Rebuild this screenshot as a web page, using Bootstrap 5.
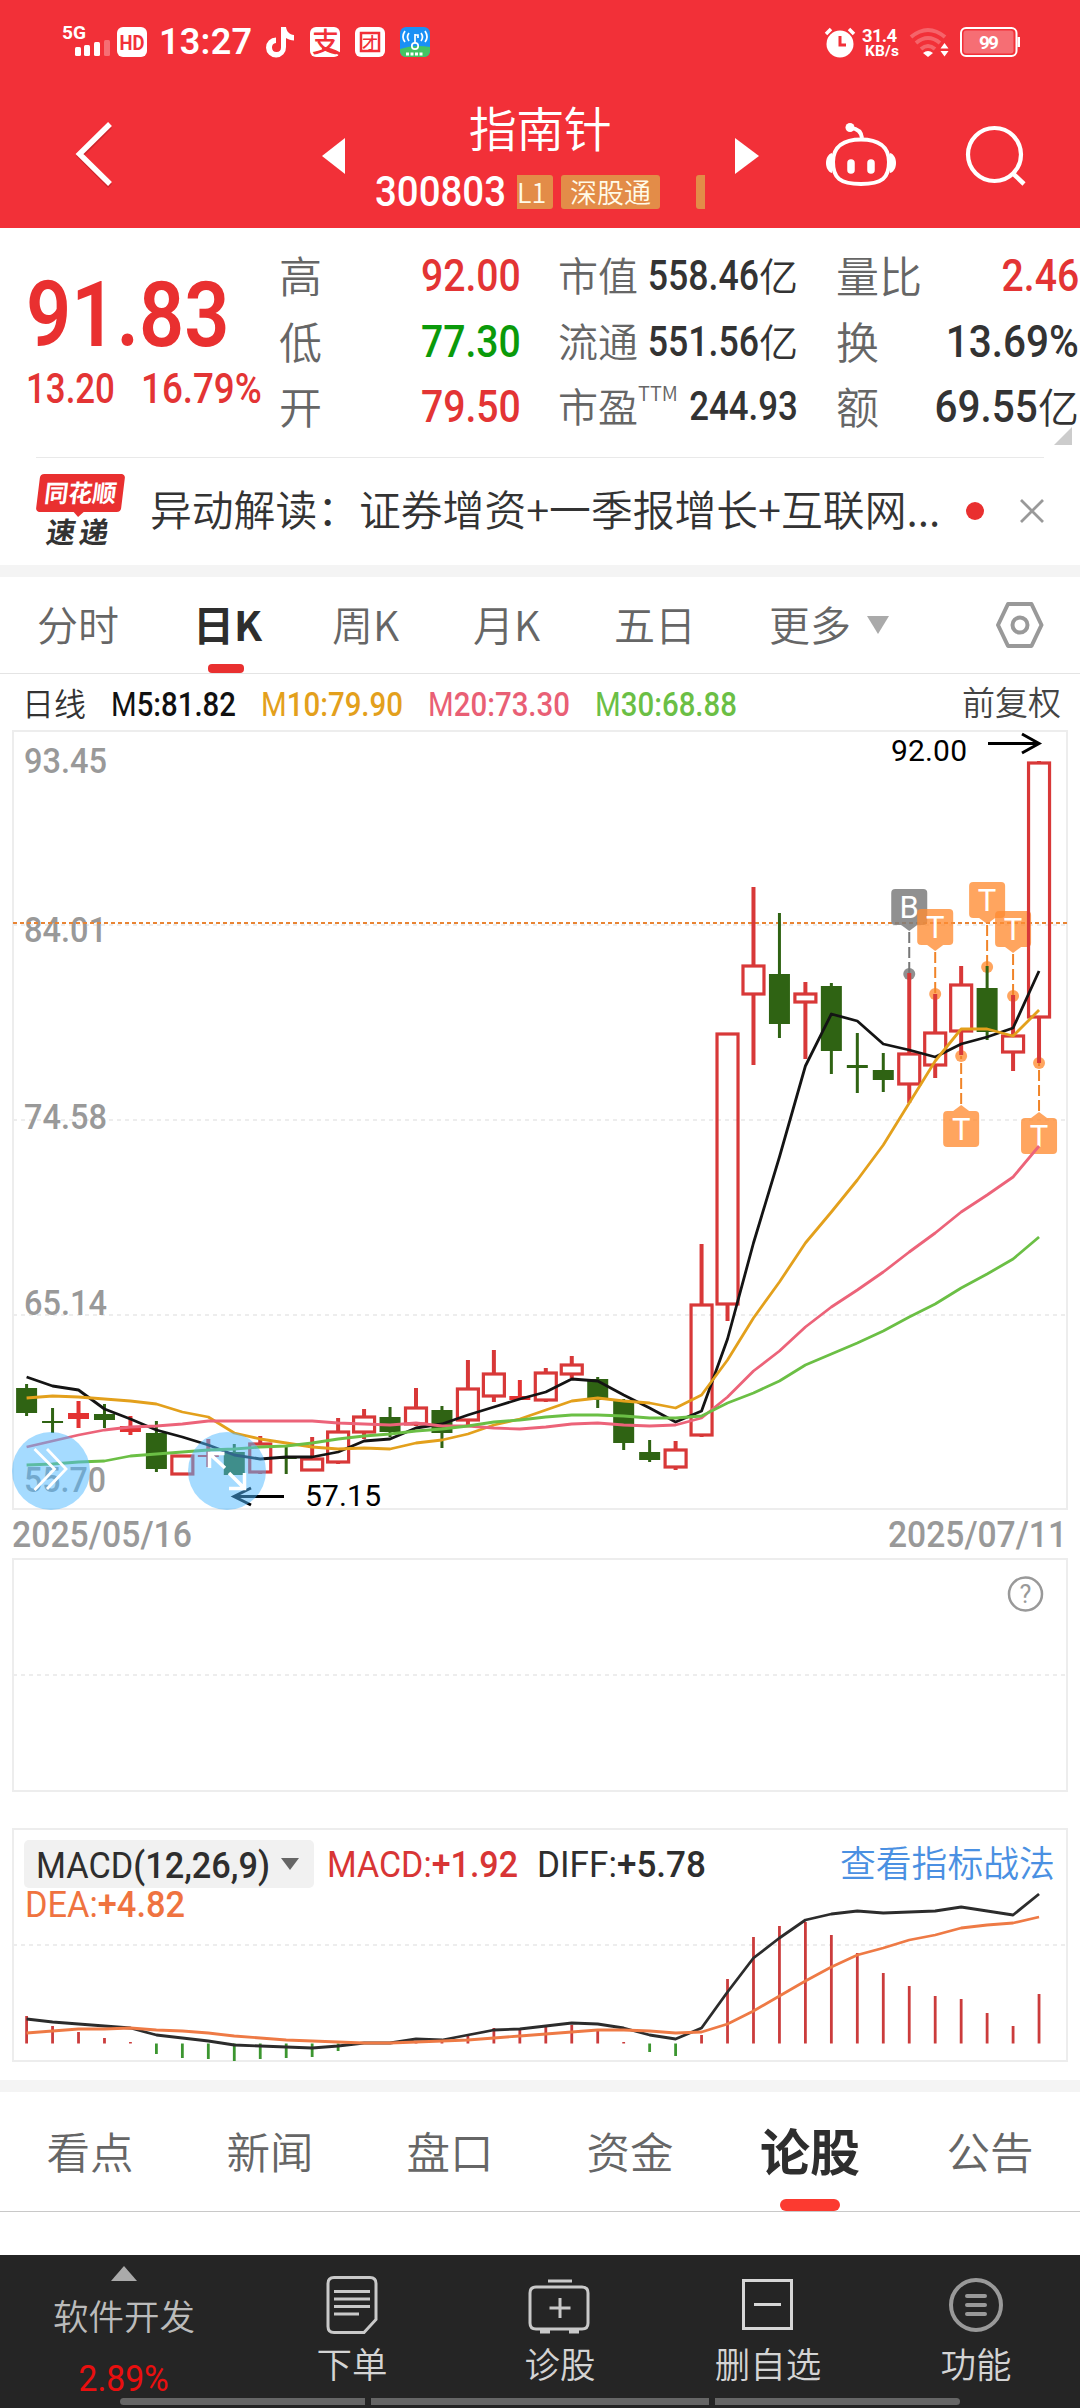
<!DOCTYPE html>
<html lang="zh-CN">
<head>
<meta charset="utf-8">
<meta name="viewport" content="width=device-width, initial-scale=1">
<title>指南针 300803</title>
<link href="https://cdn.jsdelivr.net/npm/bootstrap@5.3.0/dist/css/bootstrap.min.css" rel="stylesheet">
<style>
body{width:1080px;height:2408px;overflow:hidden;background:#fff;color:#333;font-family:Roboto,"Noto Sans CJK SC",sans-serif;line-height:1;}
svg{display:block;flex:none}
.cjk{font-family:"Noto Sans CJK SC",sans-serif;font-weight:350}
.num{display:inline-block;transform:scaleX(.87);transform-origin:right center;font-weight:500;white-space:nowrap}
.num-l{transform-origin:left center}
.up{color:#e33434}.down{color:#0a9a0a}
.top-red{height:228px;background:#f23038;color:#fff}
.status-row{height:84px}
.title-row{height:144px}
.title-mid{width:330px;height:144px;padding-top:14px}
.stock-name{font-size:48px;line-height:56px;letter-spacing:-.5px}
.code-row{margin-top:19px}
.stock-code{font-size:42px;line-height:38px;width:130px;margin-right:12px}
.stock-code .num{transform:scaleX(.915)}
.tagbox{background:#e38c48;height:34px;border-radius:3px;font-size:27px;line-height:33px;color:#fffbe8;white-space:nowrap}
.tag-a{width:36px;border-radius:0 3px 3px 0}.tag-b{width:99px}.tag-c{width:9px;margin-left:36px;border-radius:3px 0 0 3px}
.quote{height:229px;padding-top:15px;position:relative}
.price-col{width:279px;padding-left:26px;padding-top:34px}
.price{font-size:91px;line-height:76px;color:#e93030;font-weight:600;transform:scaleX(.87)}
.chg{font-size:42px;line-height:60px;margin-top:6px}
.chg .num{transform:scaleX(.83)}
.chg .num+.num{transform:scaleX(.875)}
.chg span:first-child{width:116px}
.q-row{height:65.5px;line-height:65px;font-size:45px;white-space:nowrap}
.q-row .cjk{color:#666;font-size:43px;position:relative;top:-1px}
.q-row .yi{font-size:41px;color:#333}
.q-mid .q-row{font-size:42px}.q-mid .q-row .cjk{font-size:40px}
.q-mid .q-row .num{margin-left:-24px;transform:scaleX(.85)}
.q-mid .q-row .yi{font-size:39px}
.q-mid .q-row .ttm{font-size:20px;top:-14px}
.q-mid .q-row .nm-s{font-size:41px}
.q-a{width:242px}.q-mid{width:240px;margin-left:37px}.q-b{width:243px;margin-left:38px}
.q-b .wide-num{transform:scaleX(.9)}
.fold{position:absolute;right:8px;top:199px}
.news{height:108px;margin:0 36px;border-top:1px solid #e9e9e9}
.news-text{font-size:41.8px;width:790px;margin-left:26px;white-space:nowrap;color:#333;padding-bottom:5px}
.brand{width:88px;height:76px}
.brand-a{width:85px;height:38px;background:#e93030;border-radius:4px;transform:skewX(-7deg);color:#fff;font-size:24px;font-weight:900;line-height:36px;text-align:center;margin-left:2px;position:relative}
.brand-a:after{content:"";position:absolute;left:37px;top:37px;border:6px solid transparent;border-top-color:#e93030}
.brand-b{font-size:29px;font-weight:900;transform:skewX(-9deg);line-height:36px;margin-left:11px;letter-spacing:4px;white-space:nowrap}
.band{height:12px;background:#f4f4f4}
.ktabs{height:97px;border-bottom:1px solid #e4e4e4;font-size:41px;color:#666;padding-left:37px}
.ktabs .kt{line-height:93px;height:96px;position:relative;white-space:nowrap}
.ktabs .on{color:#2e2e2e;font-weight:700;text-indent:-4px}
.ktabs .on:after{content:"";position:absolute;left:11px;bottom:0;width:36px;height:9px;border-radius:4px;background:#e93030}
.ktabs .kt:nth-child(1){width:160px}.ktabs .kt:nth-child(2){width:135px}.ktabs .kt:nth-child(3){width:141px}.ktabs .kt:nth-child(4){width:141px}.ktabs .kt:nth-child(5){width:155px}.ktabs .kt:nth-child(6){width:98px}
.panels text{font-family:Roboto,"Noto Sans CJK SC",sans-serif}
.panels .lbl{fill:#999;font-weight:500}
.itabs{height:120px;border-bottom:1px solid #c8c8c8;font-size:43.5px;color:#666}
.itabs .it{width:180px;height:119px;line-height:117px;text-align:center;position:relative}
.itabs .on{font-size:50px;line-height:115px;color:#2e2e2e;font-weight:600}
.itabs .on:after{content:"";position:absolute;left:60px;bottom:0;width:60px;height:12px;border-radius:6px;background:#fc3a30}
.dock{height:153px;background:#252525;color:#d4d4d4;font-size:35.5px;margin-top:43px;position:relative}
.dock .dk{width:208px}
.dock .dk:first-child{width:248px;color:#bbb}
.dock .rate{font-family:Roboto,sans-serif;font-size:37px;font-weight:400;color:#e90f0f;transform:scaleX(.91);margin-top:27px}
.homebar{position:absolute;left:120px;top:143px;gap:6px}
.homebar i{height:7px;background:#666}
</style>
</head>
<body class="d-flex flex-column">
<header class="top-red">
  <div class="status-row">
  <svg width="1080" height="84" viewBox="0 0 1080 84" fill="#fff" font-family="Roboto" font-weight="700">
    <text x="62" y="39" font-size="19" textLength="24" lengthAdjust="spacingAndGlyphs">5G</text>
    <rect x="75" y="47" width="6" height="9" rx="1.5"/><rect x="84" y="45" width="6" height="11" rx="1.5"/><rect x="94" y="42" width="6" height="14" rx="1.5"/><rect x="104" y="40" width="6" height="16" rx="1.5" opacity=".3"/>
    <rect x="117" y="27" width="30" height="30" rx="6"/>
    <text x="119.500" y="49.500" font-size="20" fill="#f23038" textLength="25" lengthAdjust="spacingAndGlyphs">HD</text>
    <text x="159" y="53.500" font-size="36" font-weight="600" textLength="93">13:27</text>
    <path d="M281 27h5c.5 4.500 3.500 7.500 8 8v5.500c-3 0-5.500-1-8-2.500v9a10 10 0 1 1-10-9.500v5.500a4.500 4.500 0 1 0 5 4.500z"/>
    <rect x="310" y="27" width="30" height="30" rx="6"/>
    <text x="312" y="52" font-size="27" fill="#f23038" font-family="Noto Sans CJK SC" font-weight="500">支</text>
    <path d="M322 48q9 1 18 6" fill="none" stroke="#f23038" stroke-width="3"/>
    <rect x="355" y="27" width="30" height="30" rx="6"/>
    <path d="M361 33h18v18h-18z" fill="none" stroke="#f23038" stroke-width="2.500"/>
    <text x="362" y="49" font-size="16" fill="#f23038" font-family="Noto Sans CJK SC" font-weight="500">才</text>
    <rect x="400" y="27" width="30" height="30" rx="6" fill="#1a90f5"/>
    <path d="M400 49q14-5 30-2v4a6 6 0 0 1-6 6h-18a6 6 0 0 1-6-6z" fill="#43c463"/>
    <g fill="none" stroke="#fff" stroke-width="1.700"><circle cx="415" cy="46" r="3.200"/><path d="M415 43v-9m0 1h3v3M409 33q-3 4 0 8M405 31q-4 6 0 11M421 33q3 4 0 8M425 31q4 6 0 11"/></g>
    <path d="M406 54h18" stroke="#fff" stroke-width="3" stroke-dasharray="3 1.500"/>
    <circle cx="840" cy="44" r="13.500"/><path d="M826 34l5-5M849 29l5 5" stroke="#fff" stroke-width="3.500"/><path d="M840 36v9h6" fill="none" stroke="#f23038" stroke-width="3"/>
    <text x="862" y="41.500" font-size="18.500" textLength="35">31.4</text><text x="865" y="56" font-size="15.500" textLength="34">KB/s</text>
    <g fill="none" stroke="#fff" stroke-width="4" opacity=".25"><path d="M911 37q17-14 34 0M916 43q12-10 24 0M921 49q7-6 14 0"/></g><path d="M923 53q5-4 10 0l-5 4z"/>
    <path d="M940.500 48.500l4-5.500 4 5.500zM940.500 51l4 5.500 4-5.500z"/>
    <rect x="961" y="28" width="55.500" height="28" rx="5" fill="none" stroke="#fff" stroke-width="2"/><rect x="963.500" y="30.500" width="50" height="23" rx="3" opacity=".3"/><path d="M1017.500 37h2.500v10h-2.500z"/>
    <text x="979" y="49" font-size="19" textLength="20">99</text>
  </svg>
  </div>
  <div class="title-row d-flex">
    <svg width="375" height="144" viewBox="0 84 375 144"><path d="M110 124L80 154l30 30" fill="none" stroke="#8c1018" stroke-opacity=".35" stroke-width="5.500" transform="translate(0 2)"/><path d="M110 124L79.500 154l30.500 30" fill="none" stroke="#fff" stroke-width="5.500"/><path d="M322 156l23-18v36z" fill="#fff"/></svg>
    <div class="title-mid">
      <div class="stock-name text-center cjk">指南针</div>
      <div class="code-row d-flex align-items-center">
        <div class="stock-code"><span class="num num-l">300803</span></div>
        <div class="tagbox tag-a cjk">L1</div>
        <div class="tagbox tag-b cjk text-center ms-2">深股通</div>
        <div class="tagbox tag-c"></div>
      </div>
    </div>
    <svg width="375" height="144" viewBox="705 84 375 144" fill="none" stroke="#fff"><path d="M735 138l24 18-24 18z" fill="#fff" stroke="none"/>
      <path d="M861 139.500c17 0 28 7 28 22.500 0 16-7 22-28 22s-28-6-28-22c0-15.500 11-22.500 28-22.500z" stroke-width="4"/>
      <path d="M862 138q-1-9-11-10" stroke-width="4"/><circle cx="850" cy="127.500" r="4.500" fill="#fff" stroke="none"/>
      <path d="M832 153c-8 2-8 18 0 20zM890 153c8 2 8 18 0 20z" fill="#fff" stroke="none"/>
      <path d="M851 163v7M871 163v7" stroke-width="7.500" stroke-linecap="round"/>
      <circle cx="994.500" cy="154.500" r="26.500" stroke-width="4.200"/><path d="M1012.500 173l11.500 11" stroke-width="4.500"/></svg>
  </div>
</header>

<section class="quote d-flex">
  <div class="price-col">
    <div class="price num num-l">91.83</div>
    <div class="chg up d-flex"><span class="num num-l">13.20</span><span class="num num-l">16.79%</span></div>
  </div>
  <div class="q-a">
    <div class="q-row d-flex justify-content-between"><span class="cjk">高</span><span class="num up">92.00</span></div>
    <div class="q-row d-flex justify-content-between"><span class="cjk">低</span><span class="num down">77.30</span></div>
    <div class="q-row d-flex justify-content-between"><span class="cjk">开</span><span class="num up">79.50</span></div>
  </div>
  <div class="q-mid">
    <div class="q-row d-flex"><span class="cjk me-auto">市值</span><span class="num">558.46</span><span class="cjk yi">亿</span></div>
    <div class="q-row d-flex"><span class="cjk me-auto">流通</span><span class="num">551.56</span><span class="cjk yi">亿</span></div>
    <div class="q-row d-flex"><span class="cjk">市盈</span><span class="cjk ttm me-auto">TTM</span><span class="num nm-s">244.93</span></div>
  </div>
  <div class="q-b">
    <div class="q-row d-flex justify-content-between"><span class="cjk">量比</span><span class="num up">2.46</span></div>
    <div class="q-row d-flex justify-content-between"><span class="cjk">换</span><span class="num wide-num">13.69%</span></div>
    <div class="q-row d-flex"><span class="cjk me-auto">额</span><span class="num wide-num">69.55</span><span class="cjk yi">亿</span></div>
  </div>
  <svg class="fold" width="18" height="18"><path d="M18 0v18H0z" fill="#ccc"/></svg>
</section>

<section class="news d-flex align-items-center">
  <div class="brand"><div class="brand-a cjk fw-bolder">同花顺</div><div class="brand-b cjk fw-bolder">速递</div></div>
  <div class="news-text cjk">异动解读：证券增资+一季报增长+互联网...</div>
  <svg class="ms-auto" width="80" height="30" viewBox="964 497 80 30"><circle cx="975" cy="511" r="9" fill="#e93030"/><path d="M1021 500l22 22m0-22l-22 22" stroke="#999" stroke-width="2.800"/></svg>
</section>
<div class="band"></div>

<nav class="ktabs d-flex cjk">
  <div class="kt">分时</div><div class="kt on">日K</div><div class="kt">周K</div><div class="kt">月K</div><div class="kt">五日</div><div class="kt">更多</div>
  <svg width="190" height="96" viewBox="867 577 190 96"><path d="M867 616h22l-11 18z" fill="#aaa"/><g fill="none" stroke="#999" stroke-width="4"><path d="M1008 604h23.500l10 21-10 21H1008l-10-21z" stroke-linejoin="round"/><circle cx="1020" cy="625" r="7.500"/></g></svg>
</nav>

<main class="panels">
<svg id="chart" width="1080" height="1406" viewBox="0 674 1080 1406">
  <g font-size="34" font-weight="500">
    <text x="22" y="716" font-size="32" font-weight="350" fill="#333" class="cjk">日线</text>
    <text x="111" y="716" fill="#111" textLength="125" lengthAdjust="spacingAndGlyphs"><tspan font-weight="400">M</tspan>5:81.82</text>
    <text x="261" y="716" fill="#e3a01c" textLength="142" lengthAdjust="spacingAndGlyphs"><tspan font-weight="400">M</tspan>10:79.90</text>
    <text x="428" y="716" fill="#e95f75" textLength="142" lengthAdjust="spacingAndGlyphs"><tspan font-weight="400">M</tspan>20:73.30</text>
    <text x="595" y="716" fill="#6bbf45" textLength="142" lengthAdjust="spacingAndGlyphs"><tspan font-weight="400">M</tspan>30:68.88</text>
    <text x="962" y="715" font-size="33" font-weight="350" fill="#444" class="cjk">前复权</text>
  </g>
  <g fill="none" stroke="#ededed" stroke-width="2">
    <path d="M13 731H1067V1509H13zM13 1559H1067V1791H13zM13 1829H1067V2061H13z"/>
    <path d="M13 925H1067M13 1120H1067M13 1315H1067M13 1675H1067M13 1945H1067" stroke-dasharray="4 4"/>
  </g>
  <g class="lbl" font-size="35">
    <text x="24" y="773" textLength="83" lengthAdjust="spacingAndGlyphs">93.45</text>
    <text x="24" y="942" textLength="83" lengthAdjust="spacingAndGlyphs">84.01</text>
    <text x="24" y="1129" textLength="83" lengthAdjust="spacingAndGlyphs">74.58</text>
    <text x="24" y="1315" textLength="83" lengthAdjust="spacingAndGlyphs">65.14</text>
    <text x="24" y="1492" textLength="82" lengthAdjust="spacingAndGlyphs">55.70</text>
    <text x="12" y="1547" font-size="36.500" textLength="180" lengthAdjust="spacingAndGlyphs">2025/05/16</text>
    <text x="888" y="1547" font-size="36.500" textLength="179" lengthAdjust="spacingAndGlyphs">2025/07/11</text>
  </g>
  <path d="M13 923H1067" stroke="#e98433" stroke-width="2" stroke-dasharray="4 3"/>
  <g id="marks"></g>
  <g id="candles"></g>
  <g id="lines" fill="none" stroke-width="2.800" stroke-linejoin="round"></g>
  <g font-size="30" fill="#000"><text x="891" y="761" textLength="76">92.00</text><text x="305" y="1506" textLength="76">57.15</text></g>
  <g fill="none" stroke="#000" stroke-width="3"><path d="M988 743.500h50M1022 734l17 9.500-17 9.500M284 1496.500h-50M251 1488l-17 8.500 17 8.500"/></g>
  <g fill="#4eb8ff" fill-opacity=".51"><circle cx="51" cy="1471" r="39"/><circle cx="227" cy="1471" r="39"/></g>
  <g fill="none" stroke="#fff" stroke-width="2.800"><path d="M34.500 1449l20 20-20 21M47 1449l19 20-19 20"/><path d="M209.500 1468v-14.500h15M211 1455l14 13M229 1473l15 15M244.500 1473v15.500h-15.500" stroke-width="3.500"/></g>
  <circle cx="1025.500" cy="1594" r="16.500" fill="none" stroke="#999" stroke-width="2.500"/><text x="1025.500" y="1603" font-size="25" fill="#999" text-anchor="middle">?</text>
  <rect x="24" y="1840" width="290" height="48" rx="5" fill="#f1f1f1"/><path d="M281 1858h18l-9 12z" fill="#666"/>
  <g font-size="37" font-weight="500">
    <text x="36" y="1878" fill="#2e2e2e" textLength="234" lengthAdjust="spacingAndGlyphs"><tspan font-weight="400">MACD</tspan>(12,26,9)</text>
    <text x="327" y="1877" fill="#d83535" textLength="191" lengthAdjust="spacingAndGlyphs"><tspan font-weight="400">MACD:</tspan>+1.92</text>
    <text x="537" y="1877" fill="#2e2e2e" textLength="169" lengthAdjust="spacingAndGlyphs"><tspan font-weight="400">DIFF:</tspan>+5.78</text>
    <text x="25" y="1917" fill="#ef7340" textLength="160" lengthAdjust="spacingAndGlyphs"><tspan font-weight="400">DEA:</tspan>+4.82</text>
    <text x="840" y="1877" fill="#4a90e2" font-size="35.800" font-weight="350" class="cjk">查看指标战法</text>
  </g>
  <g id="macd"></g>
</svg>
</main>
<div class="band"></div>

<nav class="itabs d-flex cjk">
  <div class="it">看点</div><div class="it">新闻</div><div class="it">盘口</div><div class="it">资金</div><div class="it on">论股</div><div class="it">公告</div>
</nav>

<footer class="dock d-flex cjk">
  <div class="dk d-flex flex-column align-items-center"><svg class="mt-2" width="26" height="18" viewBox="0 -3 26 18"><path d="M13 0l13 15H0z" fill="#aaa"/></svg><div class="pt-3">软件开发</div><div class="rate">2.89%</div></div>
  <div class="dk d-flex flex-column align-items-center"><svg width="60" height="90" viewBox="322 2255 60 90" fill="none" stroke="#c9c9c9" stroke-width="3"><path d="M334 2277.500h36q6 0 6 6v36l-12 13h-30q-6 0-6-6v-43q0-6 6-6z"/><path d="M334 2291.500h36M334 2299h36M334 2306.500h36M334 2314h25"/></svg><div>下单</div></div>
  <div class="dk d-flex flex-column align-items-center"><svg width="70" height="90" viewBox="525 2255 70 90" fill="none" stroke="#c9c9c9" stroke-width="3"><path d="M548 2281h24M536 2287h46q6 0 6 6v30q0 6-6 6h-46q-6 0-6-6v-30q0-6 6-6zM560 2298v20M549.500 2308h21"/><path d="M540 2331.500h10M569 2331.500h10" stroke-width="4"/></svg><div>诊股</div></div>
  <div class="dk d-flex flex-column align-items-center"><svg width="60" height="90" viewBox="738 2255 60 90" fill="none" stroke="#d6d6d6" stroke-width="3"><path d="M743.500 2280.500h48v48h-48zM754 2304.500h27"/></svg><div>删自选</div></div>
  <div class="dk d-flex flex-column align-items-center"><svg width="60" height="90" viewBox="946 2255 60 90" fill="none" stroke="#999" stroke-width="4"><circle cx="976" cy="2305" r="25"/><path d="M967 2296h18M967 2305h18M967 2314h18" stroke-linecap="round"/></svg><div>功能</div></div>
  <div class="homebar d-flex"><i class="rounded-start" style="width:245px"></i><i style="width:338px"></i><i class="rounded-end" style="width:245px"></i></div>
</footer>

<script src="https://cdn.jsdelivr.net/npm/bootstrap@5.3.0/dist/js/bootstrap.bundle.min.js"></script>
<script>
const X = i => 26.6 + i * 25.96;
// kind (r = hollow rise, f = flat rise, g = fall), wick top, body top, body bottom, wick bottom
const K = [['g',1384,1388,1413,1416],['g',1408,1421,1423,1433],['f',1401,1413,1419,1428],['g',1404,1414,1420,1428],['f',1416,1426,1432,1435],['g',1421,1433,1469,1472],['r',1456,1456,1474,1475],['f',1439,1455,1457,1467],['g',1444,1452,1475,1475],['r',1436,1444,1472,1474],['g',1447,1457,1459,1474],['r',1437,1459,1470,1470],['r',1418,1432,1462,1464],['r',1409,1417,1432,1439],['g',1407,1417,1432,1437],['r',1388,1408,1424,1426],['g',1406,1410,1433,1448],['r',1360,1389,1420,1427],['r',1350,1374,1396,1402],['f',1380,1396,1400,1400],['r',1368,1373,1400,1402],['r',1356,1365,1374,1378],['g',1377,1379,1400,1408],['g',1399,1400,1443,1450],['g',1440,1452,1460,1462],['r',1441,1450,1467,1470],['r',1244,1305,1435,1437],['r',1034,1034,1304,1321],['r',887,966,994,1065],['g',913,974,1024,1038],['r',982,994,1002,1059],['g',983,986,1051,1074],['g',1033,1065,1068,1093],['g',1053,1070,1080,1092],['r',973,1054,1084,1103],['r',994,1033,1065,1078],['r',966,985,1031,1055],['g',966,988,1032,1040],['r',995,1036,1052,1071],['r',761,763,1017,1063]];
candles.innerHTML = K.map(([k,a,b,c,d],i) => {
  const x = X(i), col = {g:'#2f6313', r:'#d83838', f:'#e33232'}[k];
  const wick = `<path d="M${x} ${a}V${b}M${x} ${c}V${d}" stroke="${col}" stroke-width="${k=='g'?3:4}"/>`;
  return wick + (k == 'r'
    ? `<rect x="${x-10.5}" y="${b}" width="21" height="${c-b}" fill="none" stroke="${col}" stroke-width="3.2"/>`
    : `<rect x="${x-10.5}" y="${b}" width="21" height="${c-b}" fill="${col}"/>`);
}).join('');
const poly = (ys, col) => `<polyline points="${ys.map((y,i)=>X(i)+','+y).join(' ')}" stroke="${col}"/>`;
lines.innerHTML =
 poly([1377,1386,1390,1409,1419,1430,1437,1445,1455,1459,1457,1457,1452,1441,1439,1428,1424,1415,1407,1399,1392,1379,1381,1395,1408,1422,1411,1339,1243,1157,1066,1014,1021,1044,1050,1057,1044,1037,1028,971],'#141414') +
 poly([1398,1396,1397,1399,1401,1404,1412,1417,1433,1439,1443,1447,1449,1448,1449,1443,1440,1434,1425,1419,1410,1401,1398,1401,1403,1408,1395,1360,1318,1282,1243,1212,1180,1145,1103,1061,1029,1029,1036,1010],'#e3a01c') +
 poly([1447,1441,1435,1430,1427,1426,1424,1421,1421,1421,1421,1421,1423,1424,1425,1423,1426,1426,1428,1429,1427,1424,1423,1425,1426,1425,1418,1397,1371,1351,1327,1307,1290,1272,1252,1233,1212,1195,1177,1146],'#ec6379') +
 poly([1465,1464,1462,1461,1456,1454,1452,1450,1449,1447,1446,1443,1439,1436,1434,1431,1429,1426,1422,1420,1417,1415,1415,1416,1418,1418,1416,1403,1393,1381,1365,1354,1343,1331,1317,1304,1288,1274,1259,1237],'#6bbf45');
// trade markers: candle index, letter, dot y, box top
marks.innerHTML = [[34,'B',974,889],[35,'T',994,909],[37,'T',967,882],[38,'T',996,911],[36,'T',1056,1111],[39,'T',1063,1118]].map(([i,t,dy,by]) => {
  const x = X(i), up = by < dy, b = t == 'B';
  const fill = b ? '#7d7d7d' : '#ff8c32', line = b ? '#777' : '#f08428', e = up ? by+36 : by;
  return `<g fill="${fill}" fill-opacity="${b ? .85 : .78}"><rect x="${x-18}" y="${by}" width="36" height="36" rx="4"/>
   <path d="M${x-8} ${e}h16l-8 ${up?6:-6}z"/><circle cx="${x}" cy="${dy}" r="6"/></g>
   <path d="M${x} ${up?e+7:e-7}V${dy}" stroke="${line}" stroke-width="2" stroke-dasharray="11 4"/>
   <text x="${x}" y="${by+29}" font-size="31" fill="#fff" text-anchor="middle">${t}</text>`;
}).join('');
const H = [2016,2026,2032,2038,2042,2054,2058,2059,2061,2059,2058,2057,2051,2044,2042,2042,2041,2036,2028,2029,2027,2025,2031,2042,2052,2056,2035,1979,1937,1926,1922,1935,1953,1973,1986,1996,1999,2013,2026,1994];
macd.innerHTML = H.map((y,i) => `<path d="M${X(i)} 2043.500V${y}" stroke="${y>2043.5?'#3c9630':'#cb3c3c'}" stroke-width="2.800"/>`).join('') +
 '<g fill="none" stroke-width="2.800" stroke-linejoin="round">' +
 poly([2019,2022,2024,2026,2028,2035,2038,2041,2045,2046,2047,2048,2046,2043,2043,2039,2040,2035,2030,2029,2026,2023,2024,2028,2035,2039,2028,1992,1958,1938,1920,1914,1911,1913,1912,1911,1907,1911,1915,1894],'#2c2c2c') +
 poly([2033,2031,2029,2029,2028,2030,2031,2033,2036,2038,2040,2041,2042,2043,2043,2042,2041,2040,2038,2036,2034,2032,2030,2030,2031,2033,2032,2024,2011,1996,1981,1967,1955,1948,1940,1935,1928,1925,1923,1917],'#ee7a45') + '</g>';
</script>
</body>
</html>
